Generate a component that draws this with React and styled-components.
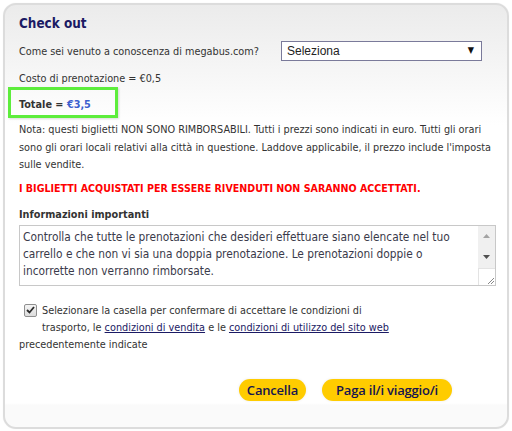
import React from 'react';
import styled, { createGlobalStyle } from 'styled-components';

const GlobalStyle = createGlobalStyle`
  html, body {
    margin: 0;
    padding: 0;
    background: #ffffff;
  }
  body {
    font-family: "DejaVu Sans Condensed", "DejaVu Sans", sans-serif;
    font-stretch: condensed;
    font-size: 10.8px;
    color: #333333;
  }
`;

const Page = styled.div`
  padding: 3px;
`;

const Card = styled.div`
  box-sizing: border-box;
  width: 506px;
  height: 426px;
  border: 2px solid #dcdcdc;
  border-radius: 13px;
  box-shadow: 0 0 1px #e6e6e6;
  background: linear-gradient(to bottom, #ebebeb 0px, #ffffff 120px, #ffffff 398px, #fafafa 400px);
  padding: 10px 12px 0 14px;
`;

const Title = styled.h2`
  margin: 0;
  font-size: 13.4px;
  line-height: 18px;
  font-weight: bold;
  color: #1b1a64;
`;

const Row = styled.div`
  display: flex;
  align-items: center;
  justify-content: space-between;
  margin-top: 8px;
  height: 20px;
  padding-right: 13px;
  white-space: nowrap;
`;

const SelectWrap = styled.div`
  position: relative;
  width: 201px;
  height: 20px;
`;

const Select = styled.select`
  appearance: none;
  box-sizing: border-box;
  width: 100%;
  height: 100%;
  border: 1px solid #7a7a9a;
  background: #ffffff;
  font-family: "Liberation Sans", Arial, sans-serif;
  font-size: 12px;
  color: #222222;
  padding: 0 0 0 5px;
  border-radius: 0;
`;

const Arrow = styled.span`
  position: absolute;
  right: 8px;
  top: 4px;
  font-size: 9px;
  color: #111111;
  pointer-events: none;
`;

const Line = styled.div`
  line-height: 17px;
  margin-top: ${p => p.$top || 0}px;
`;

const TotalBox = styled.div`
  box-sizing: border-box;
  width: 110px;
  margin: 0 0 0 -11px;
  border: 3px solid #5ded3c;
  padding: 6px 0 2px 8px;
  line-height: 17px;
  font-weight: bold;
  font-size: 10.8px;
  box-shadow: 1px 1px 2px rgba(0, 0, 0, 0.15);
`;

const Price = styled.span`
  color: #3b5fce;
`;

const Note = styled.p`
  margin: 3px 0 0;
  line-height: 17.5px;
`;

const Warning = styled.p`
  margin: 6px 0 0;
  line-height: 17px;
  font-size: 10.6px;
  color: #ff0000;
  font-weight: bold;
`;

const Label = styled.div`
  margin-top: 9px;
  line-height: 17px;
  font-weight: bold;
  color: #333333;
`;

const InfoBox = styled.div`
  display: flex;
  box-sizing: border-box;
  margin-top: 2px;
  width: 477px;
  height: 61px;
  border: 1px solid #c8c8c8;
  background: #ffffff;
`;

const InfoText = styled.textarea`
  flex: 1;
  border: none;
  outline: none;
  resize: none;
  overflow: hidden;
  padding: 3px 3px 0;
  margin: 0;
  font-family: inherit;
  font-stretch: condensed;
  font-size: 11.8px;
  line-height: 17px;
  color: #3a3a4a;
  background: transparent;
`;

const ScrollBar = styled.div`
  display: flex;
  flex-direction: column;
  width: 17px;
  background: #f0f0f0;
`;

const ScrollButton = styled.div`
  height: 22px;
  display: flex;
  align-items: center;
  justify-content: center;
  color: ${p => (p.$dim ? '#a3a3a3' : '#505050')};
`;

const ScrollTrack = styled.div`
  flex: 1;
`;

const Grip = styled.div`
  height: 16px;
  background: #ffffff;
  border-left: 1px solid #e3e3e3;
  border-top: 1px solid #e3e3e3;
  display: flex;
  align-items: flex-end;
  justify-content: flex-end;
`;

const Consent = styled.div`
  margin-top: 16px;
  line-height: 17px;
`;

const CheckBox = styled.span`
  float: left;
  box-sizing: border-box;
  width: 13px;
  height: 13px;
  margin: 2px 5px 14px 5px;
  border: 1px solid #8f8f8f;
  border-radius: 2px;
  background: linear-gradient(#f4f4f4, #dcdcdc);
  display: flex;
  align-items: center;
  justify-content: center;
`;

const Link = styled.a`
  color: #1b1a64;
  text-decoration: underline;
`;

const Actions = styled.div`
  display: flex;
  justify-content: flex-end;
  gap: 16px;
  margin-top: 26px;
  padding-right: 43px;
`;

const Button = styled.button`
  height: 22px;
  border: none;
  border-radius: 11px;
  background: #ffcc00;
  padding: 0 ${p => p.$pad}px;
  font-family: "Open Sans", sans-serif;
  font-size: 13px;
  font-weight: 600;
  letter-spacing: -0.2px;
  color: #16154f;
  line-height: 22px;
  box-shadow: 0 0 3px rgba(0, 0, 0, 0.08);
  cursor: pointer;
`;

export default function App() {
  return (
    <Page>
      <GlobalStyle />
      <Card>
        <Title>Check out</Title>
        <Row>
          <span>Come sei venuto a conoscenza di megabus.com?</span>
          <SelectWrap>
            <Select defaultValue="">
              <option value="">Seleziona</option>
            </Select>
            <Arrow>▼</Arrow>
          </SelectWrap>
        </Row>
        <Line $top={9}>Costo di prenotazione = €0,5</Line>
        <TotalBox>
          Totale = <Price>€3,5</Price>
        </TotalBox>
        <Note>
          Nota: questi biglietti NON SONO RIMBORSABILI. Tutti i prezzi sono indicati in euro. Tutti gli orari
          sono gli orari locali relativi alla città in questione. Laddove applicabile, il prezzo include l'imposta
          sulle vendite.
        </Note>
        <Warning>I BIGLIETTI ACQUISTATI PER ESSERE RIVENDUTI NON SARANNO ACCETTATI.</Warning>
        <Label>Informazioni importanti</Label>
        <InfoBox>
          <InfoText
            readOnly
            defaultValue="Controlla che tutte le prenotazioni che desideri effettuare siano elencate nel tuo carrello e che non vi sia una doppia prenotazione. Le prenotazioni doppie o incorrette non verranno rimborsate."
          />
          <ScrollBar>
            <ScrollButton $dim>
              <svg width="7" height="4" viewBox="0 0 7 4"><path d="M0 4 L3.5 0 L7 4 Z" fill="currentColor" /></svg>
            </ScrollButton>
            <ScrollTrack />
            <ScrollButton>
              <svg width="7" height="4" viewBox="0 0 7 4"><path d="M0 0 L7 0 L3.5 4 Z" fill="currentColor" /></svg>
            </ScrollButton>
            <Grip>
              <svg width="9" height="9" viewBox="0 0 9 9">
                <path d="M8 2 L2 8 M8 5 L5 8" stroke="#888" strokeWidth="1" />
              </svg>
            </Grip>
          </ScrollBar>
        </InfoBox>
        <Consent>
          <CheckBox>
            <svg width="9" height="8" viewBox="0 0 9 8">
              <path d="M1 4 L3.5 6.5 L8 1" fill="none" stroke="#2b2b2b" strokeWidth="1.8" />
            </svg>
          </CheckBox>
          Selezionare la casella per confermare di accettare le condizioni di
          <br />
          trasporto, le <Link href="#">condizioni di vendita</Link> e le{' '}
          <Link href="#">condizioni di utilizzo del sito web</Link>
          <br />
          precedentemente indicate
        </Consent>
        <Actions>
          <Button $pad={8}>Cancella</Button>
          <Button $pad={14}>Paga il/i viaggio/i</Button>
        </Actions>
      </Card>
    </Page>
  );
}
